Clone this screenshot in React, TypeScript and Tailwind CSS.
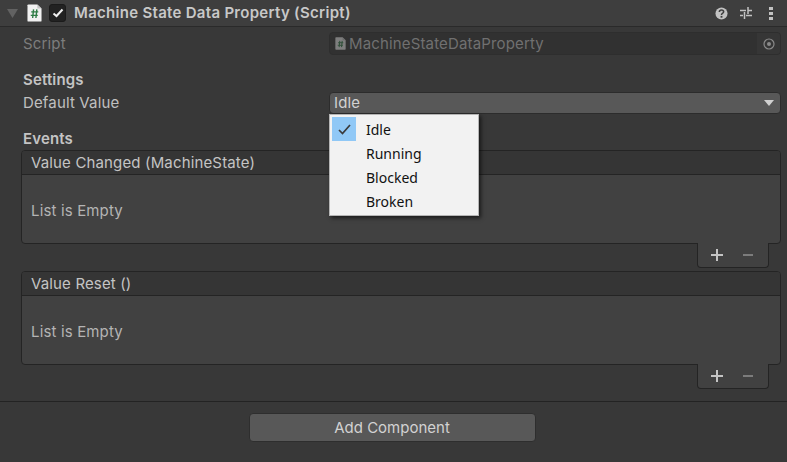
import React from 'react'

function ScriptIcon({ dim = false }: { dim?: boolean }) {
   return (
      <svg width="16" height="20" viewBox="0 0 16 20" preserveAspectRatio="none" className={dim ? 'w-[11px] h-[13px] shrink-0 opacity-40' : 'w-[15px] h-[18px] shrink-0'}>
         <path d="M.5 1.500 Q.5 .5 1.500 .5 H11 L15.500 5 V18.500 Q15.500 19.500 14.500 19.500 H1.500 Q.5 19.500 .5 18.500 Z" fill="#f1f1f1" />
         <path d="M11 .5 V5 H15.500 Z" fill="#c4c4c4" />
         <path d="M7 6 L6 15.500 M10.500 6 L9.500 15.500 M4.500 8.700 H12 M4 12.700 H11.500" stroke="#2f7d46" strokeWidth="1.500" fill="none" />
      </svg>
   )
}

function ListBlock({ title }: { title: string }) {
   return (
      <div className="flex flex-col">
         <div className="h-[94px] rounded-[4px] border border-[#242424] bg-[#414141] flex flex-col overflow-hidden">
            <div className="h-[24px] shrink-0 bg-[#353535] border-b border-[#242424] pl-[9px] flex items-center text-[#c4c4c4]">{title}</div>
            <div className="flex-1 pl-[9px] pt-[3px] flex items-center text-[#b4b4b4]">List is Empty</div>
         </div>
         <div className="relative self-end mr-[12px] -mt-[1px] w-[72px] h-[25px] rounded-b-[4px] border border-t-0 border-[#242424] bg-[#414141] flex items-center pl-[13px] gap-[20px]">
            <svg width="12" height="12" viewBox="0 0 12 12"><path d="M6 0 V12 M0 6 H12" stroke="#c4c4c4" strokeWidth="2" /></svg>
            <svg width="10" height="12" viewBox="0 0 10 12"><path d="M0 6 H10" stroke="#7c7c7c" strokeWidth="2" /></svg>
         </div>
      </div>
   )
}

const menuItems = ['Idle', 'Running', 'Blocked', 'Broken']

export default function App() {
   return (
      <div className="relative w-[787px] h-[462px] overflow-hidden bg-[#383838] text-[15px] tracking-[0.15px] leading-[20px] text-[#c4c4c4] font-['Inter',sans-serif] flex flex-col">
         {/* component header */}
         <header className="h-[27px] shrink-0 bg-[#3e3e3e] border-b border-[#2a2a2a] flex items-center">
            <svg width="11" height="9" viewBox="0 0 11 9" className="ml-[7px] shrink-0"><path d="M0 0 H11 L5.500 9 Z" fill="#626262" /></svg>
            <div className="ml-[9px] flex"><ScriptIcon /></div>
            <div className="ml-[7px] w-[17px] h-[18px] rounded-[3px] bg-[#222222] border border-[#1b1b1b] flex items-center justify-center shrink-0">
               <svg width="12" height="10" viewBox="0 0 12 10"><path d="M1.500 5.500 L4.500 8 L10.500 1.500" stroke="#f0f0f0" strokeWidth="2" fill="none" /></svg>
            </div>
            <span className="ml-[8px] font-semibold text-[#c8c8c8] tracking-[0.29px]">Machine State Data Property (Script)</span>
            <div className="ml-auto flex items-center pr-[14px]">
               <svg width="13" height="13" viewBox="0 0 14 14"><circle cx="7" cy="7" r="6.500" fill="#c2c2c2" /><path d="M4.700 5.400 Q4.700 3.300 7 3.300 Q9.300 3.300 9.300 5.200 Q9.300 6.300 8 6.900 Q7 7.400 7 8.500" stroke="#3e3e3e" strokeWidth="1.700" fill="none" /><rect x="6" y="9.600" width="2" height="1.900" fill="#3e3e3e" /></svg>
               <svg width="12" height="12" viewBox="0 0 12 12" className="ml-[12px]"><path d="M0 3.500 H6 M8 3.500 H12 M8 0 V7 M0 8.500 H3 M6 8.500 H12 M4.500 5 V12" stroke="#c2c2c2" strokeWidth="1.500" fill="none" /></svg>
               <svg width="4" height="13" viewBox="0 0 4 13" className="ml-[17px]"><path d="M0 0 H4 V3 H0 Z M0 5 H4 V8 H0 Z M0 10 H4 V13 H0 Z" fill="#c2c2c2" /></svg>
            </div>
         </header>

         {/* inspector fields */}
         <section className="flex-1 flex flex-col pl-[23px] pr-[6px]">
            <div className="mt-[5px] h-[23px] flex items-center">
               <span className="w-[306px] text-[#7d7d7d]">Script</span>
               <div className="flex-1 h-[23px] rounded-[4px] border border-[#2e2e2e] bg-[#313131] flex items-center pl-[5px] text-[#707070] overflow-hidden">
                  <ScriptIcon dim />
                  <span className="ml-[3px]">MachineStateDataProperty</span>
                  <div className="ml-auto w-[23px] h-full bg-[#363636] flex items-center justify-center">
                     <svg width="12" height="12" viewBox="0 0 12 12"><circle cx="6" cy="6" r="5" stroke="#8a8a8a" strokeWidth="1.200" fill="none" /><circle cx="6" cy="6" r="2" fill="#8a8a8a" /></svg>
                  </div>
               </div>
            </div>
            <div className="mt-[15px] h-[20px] flex items-center font-semibold text-[#c4c4c4]">Settings</div>
            <div className="mt-[2px] h-[22px] flex items-center">
               <span className="w-[306px] text-[#c0c0c0]">Default Value</span>
               <div className="flex-1 h-[22px] rounded-[4px] border border-[#2c2c2c] bg-[#585858] flex items-center pl-[4px] pr-[5px] text-[#d2d2d2]">
                  Idle
                  <svg width="12" height="7" viewBox="0 0 12 7" className="ml-auto"><path d="M1 0 H11 L6 6 Z" fill="#d0d0d0" /></svg>
               </div>
            </div>
            <div className="mt-[15px] h-[20px] flex items-center font-semibold text-[#c4c4c4]">Events</div>
            <div className="-ml-[2px] mt-[1px] flex flex-col gap-[3px]">
               <ListBlock title="Value Changed (MachineState)" />
               <ListBlock title="Value Reset ()" />
            </div>
         </section>

         {/* add component */}
         <footer className="h-[61px] shrink-0 border-t border-[#232323] flex justify-center pt-[11px] pr-[3px]">
            <button className="w-[287px] h-[29px] rounded-[4px] bg-[#585858] border border-[#2e2e2e] text-[#d2d2d2] tracking-normal">Add Component</button>
         </footer>

         {/* popup menu */}
         <div className="absolute left-[329px] top-[114px] w-[150px] h-[102px] bg-[#f2f2f2] border border-[#b5b5b5] shadow-[2px_2px_4px_rgba(0,0,0,0.6)] pt-[2px] pl-[2px] font-['Noto_Sans',sans-serif] text-[14px] tracking-normal text-[#111111]">
            {menuItems.map((item, i) => (
               <div key={item} className="h-[24px] flex items-center">
                  <div className={`w-[24px] h-[24px] flex items-center justify-center ${i === 0 ? 'bg-[#90c8f6]' : ''}`}>
                     {i === 0 && <svg width="13" height="11" viewBox="0 0 13 11"><path d="M1 6 L4.500 9.500 L12 1" stroke="#3a3a3a" strokeWidth="1.700" fill="none" /></svg>}
                  </div>
                  <span className="ml-[10px] relative top-[1px]">{item}</span>
               </div>
            ))}
         </div>
      </div>
   )
}
